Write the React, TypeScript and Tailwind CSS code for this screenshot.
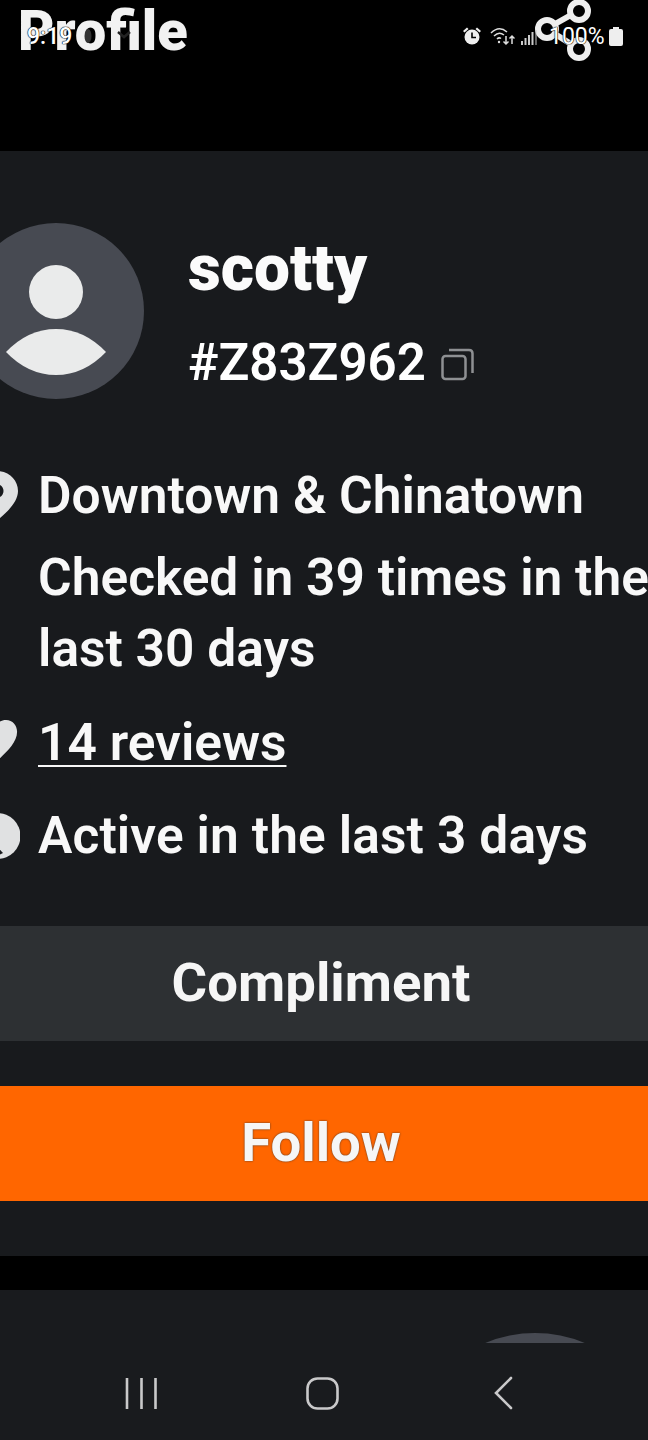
export default function App() {
  return (
    <div className="relative w-[648px] h-[1440px] overflow-hidden bg-black flex flex-col text-white font-['Roboto',sans-serif]">
      {/* Page header underneath the status bar */}
      <div className="h-[151px] shrink-0 relative">
        <div className="absolute left-[18px] top-0 text-[56px] leading-[62px] font-black text-[#f2f2f2]">Profile</div>
        <svg className="absolute left-[534px] top-0 text-[#eeeeee]" width="60" height="62" viewBox="0 0 60 62" fill="none" stroke="currentColor" strokeWidth="6">
          <circle cx="45" cy="11" r="9" />
          <circle cx="13" cy="29" r="9" />
          <circle cx="45" cy="49" r="9" />
          <path d="M21 24 L37 15 M21 34 L37 44" />
        </svg>
        {/* Status bar */}
        <svg className="absolute left-[82px] top-[26px] text-[#333]" width="12" height="20" viewBox="0 0 12 20" fill="currentColor"><ellipse cx="6" cy="10" rx="3.5" ry="7" /></svg>
        <svg className="absolute left-[116px] top-[30px] text-[#222]" width="16" height="10" viewBox="0 0 16 10" fill="none" stroke="currentColor" strokeWidth="2.5"><path d="M2 2 L8 7 L14 2" /></svg>
        <div className="absolute left-[27px] top-[23px] text-[23px] leading-[28px] font-medium text-white [text-shadow:0_0_1px_#000,0_0_1px_#000,0_0_1px_#000]">9:19</div>
        <svg className="absolute left-[462px] top-[26px] text-[#eeeeee]" width="20" height="20" viewBox="0 0 20 20" fill="currentColor">
          <circle cx="10" cy="11" r="7.5" />
          <path d="M1 5 L5 1.5 L6.5 3 L2.5 6.5Z M19 5 L15 1.5 L13.5 3 L17.5 6.5Z" />
          <path d="M10 6.5 V11.5 H14" stroke="#000" strokeWidth="1.6" fill="none" />
        </svg>
        <svg className="absolute left-[489px] top-[26px] text-[#dddddd]" width="26" height="20" viewBox="0 0 26 20" fill="none" stroke="currentColor" strokeWidth="1.5">
          <path d="M2 7 Q10 -1 18 6 M5 10 Q10 5 15 9 M8 13 Q10 11 12 12.5" />
          <circle cx="10" cy="16" r="1.2" fill="currentColor" stroke="none" />
          <path d="M17 10 V18 M14.5 15.5 L17 18 L19.5 15.5 M23 18 V10 M20.5 12.5 L23 10 L25.5 12.5" />
        </svg>
        <svg className="absolute left-[521px] top-[30px] text-[#cccccc]" width="16" height="15" viewBox="0 0 16 15" fill="currentColor">
          <rect x="0" y="11" width="2" height="4" /><rect x="3.5" y="8" width="2" height="7" /><rect x="7" y="5" width="2" height="10" /><rect x="10.5" y="2" width="2" height="13" /><rect x="14" y="0" width="2" height="15" opacity="0.5" />
        </svg>
        <div className="absolute left-[549px] top-[23px] text-[23px] leading-[28px] text-white [text-shadow:0_0_1px_#000,0_0_1px_#000,0_0_1px_#000]">100%</div>
        <svg className="absolute left-[609px] top-[27px] text-[#eeeeee]" width="14" height="19" viewBox="0 0 14 19" fill="currentColor"><path d="M4 0 H10 V2 H12 Q14 2 14 4 V17 Q14 19 12 19 H2 Q0 19 0 17 V4 Q0 2 2 2 H4Z" /></svg>
      </div>

      {/* Profile panel */}
      <div className="h-[1105px] shrink-0 bg-[#181a1d] pt-[72px] overflow-hidden">
        <div className="flex">
          <div className="-ml-8 w-[176px] h-[176px] shrink-0 rounded-full bg-[#474a52] flex flex-col items-center pt-[42px]">
            <div className="w-[54px] h-[54px] rounded-full bg-[#eaebeb]" />
            <svg className="mt-[10px]" width="100" height="46" viewBox="0 0 100 46" fill="#eaebeb"><path d="M0 23 Q22 0 50 0 Q78 0 100 23 Q78 46 50 46 Q22 46 0 23Z" /></svg>
          </div>
          <div className="ml-[44px] pt-[9px]">
            <div className="text-[64px] leading-[74px] font-black text-[#fbfbfb]">scotty</div>
            <div className="mt-[28px] flex items-center">
              <span className="text-[51px] leading-[58px] font-semibold">#Z83Z962</span>
              <svg className="ml-[15px] mt-[2px] text-[#8e9093]" width="33" height="33" viewBox="0 0 33 33" fill="none" stroke="currentColor" strokeWidth="2.5">
                <rect x="1.5" y="8" width="23" height="23" rx="3" />
                <path d="M8 2 H28 Q31.5 2 31.5 5.5 V25" />
              </svg>
            </div>
          </div>
        </div>

        <div className="mt-[62px] text-[51.5px] font-semibold text-[#f8f8f8]">
          <div className="flex items-center h-[70px]">
            <svg className="-ml-[25px] w-[43px] h-[50px] shrink-0 text-[#e0e1e2]" viewBox="0 0 43 50" fill="currentColor"><path fillRule="evenodd" d="M21.5 0 C34 0 43 9 43 20 C43 32 30 43 21.5 50 C13 43 0 32 0 20 C0 9 9 0 21.5 0Z M21.5 13 a7 7 0 1 0 .01 0Z" /></svg>
            <span className="ml-[20px]">Downtown &amp; Chinatown</span>
          </div>
          <div className="ml-[38px] mt-[11px] leading-[71px] whitespace-nowrap">
            Checked in 39 times in the<br />last 30 days
          </div>
          <div className="flex items-start h-[70px] mt-[31px]">
            <svg className="-ml-[25px] mt-[5px] w-[44px] h-[42px] shrink-0 text-[#e0e1e2]" viewBox="0 0 44 46" fill="currentColor"><path d="M12 0 C17 0 20 2 22 5 C24 2 27 0 32 0 C39 0 44 6 44 13 C44 26 30 37 21 46 C12 37 0 26 0 13 C0 6 5 0 12 0Z" /></svg>
            <span className="ml-[19px] leading-[56px] underline decoration-[2px] underline-offset-[5px]">14 reviews</span>
          </div>
          <div className="flex items-center h-[70px] mt-[16px]">
            <svg className="-ml-[25px] w-[45px] h-[48px] shrink-0 text-[#e0e1e2]" viewBox="0 0 45 48" fill="currentColor">
              <circle cx="22.5" cy="24" r="23" />
              <path d="M18 30 L28 41 L18 46Z" fill="#181a1d" />
            </svg>
            <span className="ml-[18px] tracking-[0.1px]">Active in the last 3 days</span>
          </div>
        </div>

        <div className="mt-[55px] h-[115px] bg-[#2d3033] flex items-center justify-center text-[54.5px] font-bold text-[#f6f6f6] pr-[6px] pb-[2px]">Compliment</div>
        <div className="mt-[45px] h-[115px] bg-[#ff6600] flex items-center justify-center text-[54.5px] font-bold text-[#f6f6f6] [text-shadow:0_0_2px_#333] pr-[6px] pb-[2px]">Follow</div>
      </div>

      <div className="h-[34px] shrink-0 bg-black" />

      {/* Bottom area */}
      <div className="flex-1 bg-[#191b1e]">
        <div className="flex justify-end pr-[63px] pt-[43px]">
          <div className="w-[100px] h-[10px] overflow-hidden">
            <div className="-ml-[80px] w-[260px] h-[260px] rounded-full bg-[#474a52]" />
          </div>
        </div>
        <div className="mt-[33px] flex items-center text-[#c9c9ca]">
          <svg className="ml-[125px]" width="33" height="33" viewBox="0 0 33 33" fill="none" stroke="currentColor" strokeWidth="2.6">
            <path d="M2 1 V32 M16.5 1 V32 M30.5 1 V32" />
          </svg>
          <svg className="ml-[148px]" width="33" height="33" viewBox="0 0 33 33" fill="none" stroke="currentColor" strokeWidth="2.6">
            <rect x="1.5" y="1.5" width="30" height="30" rx="10" />
          </svg>
          <svg className="ml-[155px]" width="20" height="34" viewBox="0 0 20 34" fill="none" stroke="currentColor" strokeWidth="2.6" strokeLinecap="round">
            <path d="M17 2 L2 17 L17 32" />
          </svg>
        </div>
      </div>
    </div>
  );
}
